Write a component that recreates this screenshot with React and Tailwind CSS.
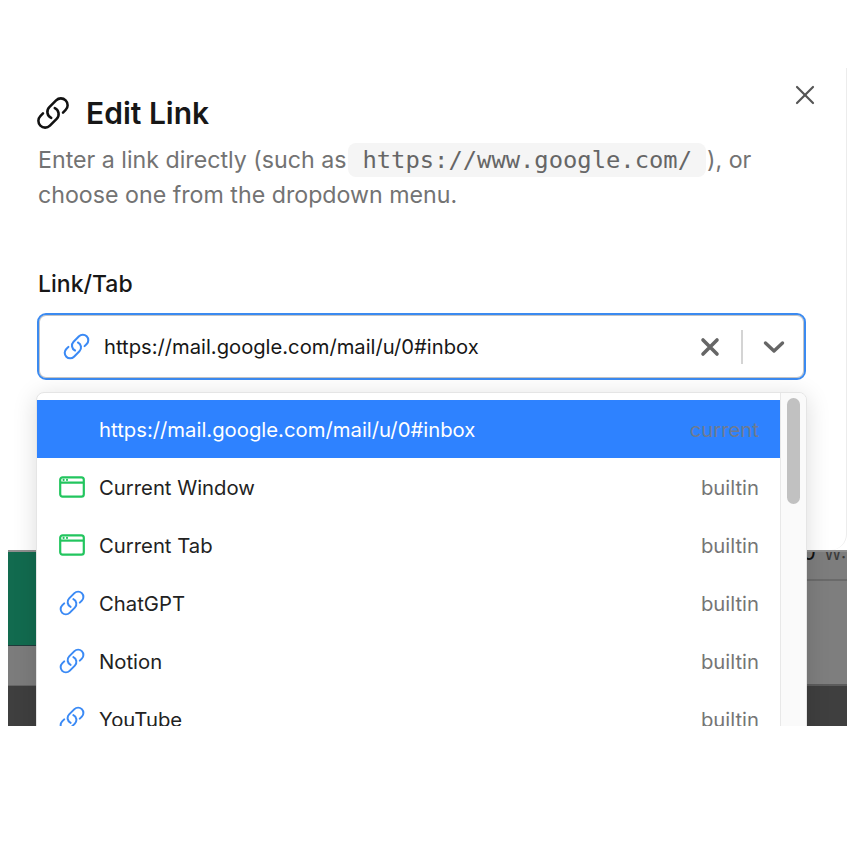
import { X } from "lucide-react";

const font = { fontFamily: "Inter, 'Noto Sans', sans-serif" };

function LinkIcon({ className }) {
  return (
    <svg viewBox="0 0 24 24" fill="none" stroke="currentColor" strokeWidth="1.7" strokeLinecap="round" strokeLinejoin="round" className={className}>
      <path d="M13.19 8.688a4.5 4.5 0 0 1 1.242 7.244l-4.5 4.5a4.5 4.5 0 0 1-6.364-6.364l1.757-1.757m13.35-.622 1.757-1.757a4.5 4.5 0 0 0-6.364-6.364l-4.5 4.5a4.5 4.5 0 0 0 1.242 7.244" />
    </svg>
  );
}

function WindowIcon() {
  return (
    <svg viewBox="0 0 26 22" fill="none" className="w-[26px] h-[22px] text-[#22c55e]">
      <rect x="1.2" y="1.4" width="23.6" height="19.2" rx="2.4" stroke="currentColor" strokeWidth="2.2" />
      <path d="M1 6.6h24" stroke="currentColor" strokeWidth="2.2" />
      <circle cx="4.6" cy="3.9" r="1.1" fill="currentColor" />
      <circle cx="8" cy="3.9" r="1.1" fill="currentColor" />
    </svg>
  );
}

const items = [
  { name: "Current Window", icon: "window" },
  { name: "Current Tab", icon: "window" },
  { name: "ChatGPT", icon: "link" },
  { name: "Notion", icon: "link" },
  { name: "YouTube", icon: "link" },
];

export default function App() {
  return (
    <div className="h-[847px] bg-white pt-[68px] pl-2" style={font}>
      <div className="relative h-[658px] overflow-hidden">
        {/* page behind the dialog */}
        <div className="h-full pt-[482px] flex justify-between">
          <div className="w-[29px] flex flex-col">
            <div className="h-[96px] bg-[#126b4f] border-t-2 border-[#8f8f8f] border-b border-b-[#1f3a3a]" />
            <div className="h-[40px] bg-[#7c7c7c] border-b border-[#666]" />
            <div className="flex-1 bg-[#3f3f3f]" />
          </div>
          <div className="w-[41px] flex flex-col">
            <div className="h-[31px] bg-[#7d7d7d] border-t-2 border-[#8f8f8f] border-b-2 border-b-[#6a6a6a] overflow-hidden">
              <p className="-mt-[15px] -ml-[4px] whitespace-nowrap text-[22px] leading-[30px] text-[#3a3a3a]">
                <span className="text-[#111]">0</span> <span className="ml-[2px] text-[18px]">W:</span>
              </p>
            </div>
            <div className="h-[105px] bg-[#7e7e7e] border-b-2 border-[#5c5c5c]" />
            <div className="flex-1 bg-[#3f3f3f]" />
          </div>
        </div>

        {/* dialog */}
        <div className="absolute top-0 left-0 right-0 h-[482px] bg-white border-r border-[#ececec] rounded-br-[16px] pl-[30px] pr-[30px] pt-[28px]">
          <button className="absolute top-[11px] right-[25px] text-[#555]">
            <X className="w-[32px] h-[32px]" strokeWidth={1.6} />
          </button>

          <div className="flex items-center gap-[15px] h-[34px] -ml-[3px]">
            <LinkIcon className="w-[36px] h-[36px] text-[#111]" />
            <h1 className="text-[30px] leading-[34px] font-semibold text-[#171717]">Edit Link</h1>
          </div>

          <p className="mt-[13px] text-[23.2px] leading-[35px] text-[#737373]">
            Enter a link directly (such as
            <code className="ml-[2px] mr-[1px] bg-[#f5f5f5] rounded-[8px] px-[14px] py-[3px] text-[23.8px] leading-none text-[#666]" style={{ fontFamily: "'DejaVu Sans Mono', monospace" }}>
              https://www.google.com/
            </code>
            ), or choose one from the dropdown menu.
          </p>

          <label className="block mt-[55px] text-[23px] leading-[32px] font-medium text-[#171717]">Link/Tab</label>

          <div className="mt-[13px] -ml-px h-[67px] w-[769px] flex items-center rounded-[9px] border-2 border-[#3b8af0] shadow-[inset_0_0_0_1px_#c4c4c4]">
            <LinkIcon className="ml-[23px] w-[29px] h-[29px] text-[#3b8af5]" />
            <span className="ml-[13px] pt-[2px] flex-1 text-[20.2px] text-[#171717]">https://mail.google.com/mail/u/0#inbox</span>
            <svg viewBox="0 0 20 20" className="w-[20px] h-[20px] text-[#666] mr-[21px]" fill="none" stroke="currentColor" strokeWidth="3.6" strokeLinecap="round">
              <path d="M3 3l14 14M17 3 3 17" />
            </svg>
            <div className="w-[2px] h-[34px] bg-[#d4d4d4]" />
            <svg viewBox="0 0 22 14" className="w-[22px] h-[14px] text-[#666] ml-[20px] mr-[19px]" fill="none" stroke="currentColor" strokeWidth="3.4" strokeLinecap="round" strokeLinejoin="round">
              <path d="M2.5 3 11 11l8.5-8" />
            </svg>
          </div>
        </div>

        {/* dropdown menu */}
        <div className="absolute top-[324px] left-[28px] w-[771px] h-[360px] bg-white border border-[#e5e5e5] rounded-[8px] shadow-[0_4px_24px_rgba(0,0,0,0.14)] overflow-hidden flex">
          <div className="flex-1 pt-[7px]">
            <div className="h-[58px] bg-[#2e82ff] flex items-center pl-[62px] pr-[21px] text-[20.3px]">
              <span className="flex-1 pt-[2px] text-white">https://mail.google.com/mail/u/0#inbox</span>
              <span className="pt-[2px] text-[#6f7b8f]">current</span>
            </div>
            {items.map((item) => (
              <div key={item.name} className="h-[58px] flex items-center pl-[21px] pr-[21px] text-[20.3px]">
                <span className="w-[41px] flex items-center">
                  {item.icon === "window" ? <span className="ml-[1px]"><WindowIcon /></span> : <LinkIcon className="w-[28px] h-[28px] text-[#3b8af5]" />}
                </span>
                <span className="flex-1 pt-[2px] text-[#222]">{item.name}</span>
                <span className="pt-[2px] text-[#757575]">builtin</span>
              </div>
            ))}
          </div>
          <div className="w-[26px] bg-[#fafafa] border-l border-[#e8e8e8] pl-[6px] pt-[5px]">
            <div className="w-[13px] h-[106px] rounded-full bg-[#c1c1c1]" />
          </div>
        </div>
      </div>
    </div>
  );
}
